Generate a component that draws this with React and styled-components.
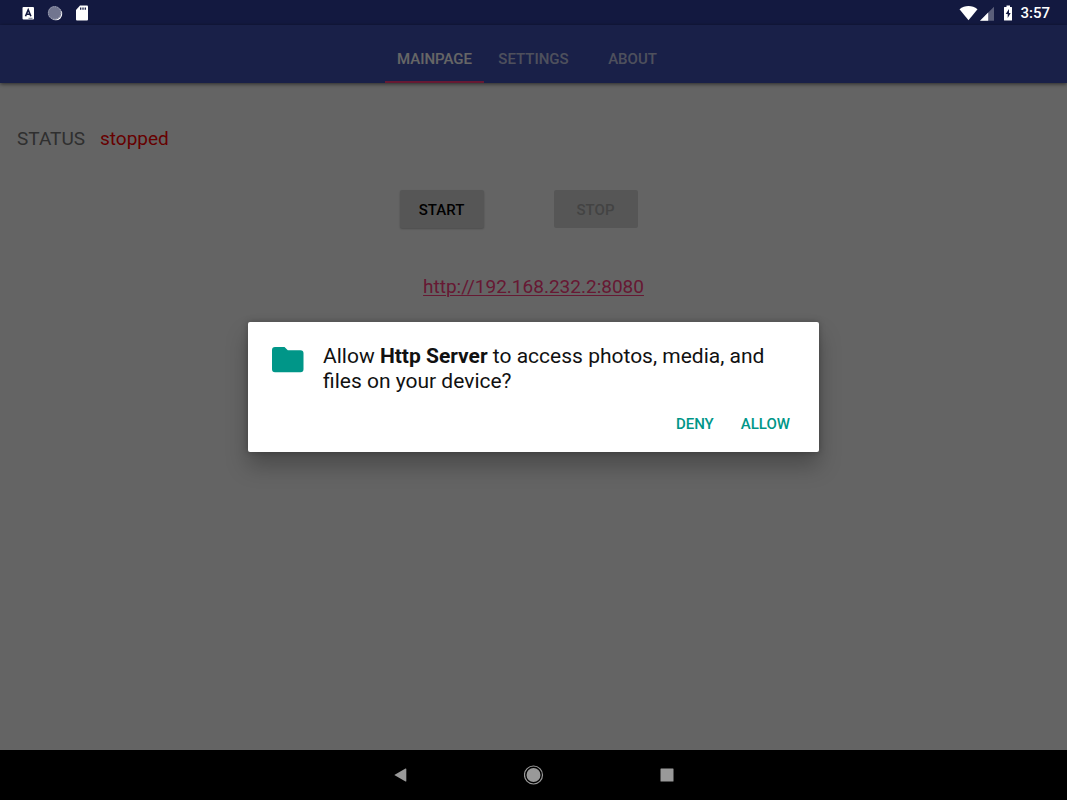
import styled, { createGlobalStyle, css } from 'styled-components';

const GlobalStyle = createGlobalStyle`
  * {
    box-sizing: border-box;
  }
  body {
    margin: 0;
    font-family: Roboto, 'Liberation Sans', sans-serif;
    background-color: #000;
  }
`;

const Device = styled.div`
  display: flex;
  flex-direction: column;
  min-height: 100vh;
`;

const StatusBar = styled.div`
  display: flex;
  justify-content: space-between;
  align-items: center;
  height: 25px;
  padding: 0 17px 0 21px;
  background-color: #131940;
  color: #fff;
`;

const Notifications = styled.div`
  display: flex;
  align-items: center;
  column-gap: 12px;
`;

const SystemIcons = styled.div`
  display: flex;
  align-items: center;
`;

const Clock = styled.time`
  margin-left: 4px;
  font-size: 15px;
  font-weight: 500;
  line-height: 23px;
  padding-top: 2px;
`;

const AppWindow = styled.div`
  position: relative;
  flex: 1;
  display: flex;
  flex-direction: column;
  background-color: #fafafa;
`;

const AppBar = styled.header`
  display: flex;
  justify-content: center;
  padding-top: 10px;
  background-color: #3f51b5;
  box-shadow: 0 1px 4px rgba(0, 0, 0, 0.6);
`;

const Tabs = styled.nav`
  display: grid;
  grid-template-columns: repeat(3, 99px);
`;

const Tab = styled.button`
  height: 48px;
  padding: 2px 0 0;
  border: 0;
  border-bottom: 2px solid ${({ $active }) => ($active ? '#ff4081' : 'transparent')};
  background: none;
  color: ${({ $active }) => ($active ? '#fff' : 'rgba(255, 255, 255, 0.7)')};
  font-family: inherit;
  font-size: 15px;
  font-weight: 500;
  text-align: center;
`;

const Content = styled.main`
  display: flex;
  flex-direction: column;
  align-items: center;
  padding: 44px 17px;
`;

const Status = styled.p`
  display: flex;
  align-self: stretch;
  column-gap: 15px;
  margin: 0;
  color: #757575;
  font-size: 19px;
  line-height: 24px;
`;

const StatusValue = styled.span`
  color: #ff0000;
`;

const Actions = styled.div`
  display: flex;
  column-gap: 70px;
  margin-top: 39px;
  padding-right: 30px;
`;

const raised = css`
  box-shadow: 0 1px 2px rgba(0, 0, 0, 0.25);
`;

const ActionButton = styled.button`
  width: 84px;
  height: 38px;
  padding: 2px 0 0;
  border: 0;
  border-radius: 2px;
  background-color: #d6d7d7;
  color: #000;
  font-family: inherit;
  font-size: 15px;
  font-weight: 500;
  ${({ disabled }) => !disabled && raised}
  &:disabled {
    color: #a8a8a8;
  }
`;

const ServerLink = styled.a`
  margin-top: 47px;
  color: #ff4081;
  font-size: 19px;
  line-height: 24px;
  text-decoration-thickness: 1px;
  text-underline-offset: 2px;
`;

const Scrim = styled.div`
  position: absolute;
  inset: 0;
  display: flex;
  justify-content: center;
  align-items: center;
  background-color: rgba(0, 0, 0, 0.6);
`;

const Dialog = styled.section`
  width: 571px;
  max-width: 90%;
  margin-bottom: 1px;
  padding: 22px 17px 9px 23px;
  border-radius: 2px;
  background-color: #fff;
  box-shadow: 0 14px 22px rgba(0, 0, 0, 0.26), 0 0 6px rgba(0, 0, 0, 0.25);
`;

const Message = styled.div`
  display: flex;
  column-gap: 19px;
`;

const FolderIcon = styled.svg`
  flex: none;
  width: 33px;
  height: 32px;
`;

const Question = styled.h1`
  margin: 0;
  color: #111;
  font-size: 21px;
  font-weight: 400;
  line-height: 25px;
`;

const DialogButtons = styled.div`
  display: flex;
  justify-content: flex-end;
  column-gap: 3px;
  margin-top: 11px;
`;

const DialogButton = styled.button`
  height: 38px;
  padding: 0 12px;
  border: 0;
  background: none;
  color: #009688;
  font-family: inherit;
  font-size: 15px;
  font-weight: 500;
`;

const NavigationBar = styled.nav`
  display: flex;
  justify-content: center;
  column-gap: 83px;
  height: 50px;
  background-color: #000;
`;

const NavButton = styled.button`
  display: flex;
  justify-content: center;
  align-items: center;
  width: 50px;
  padding: 0;
  border: 0;
  background: none;
`;

const KeyboardIcon = () => (
  <svg width="14" height="16" viewBox="0 0 14 16" aria-hidden="true">
    <rect x="1.5" y="2" width="11.5" height="12.5" rx="1" fill="#fff" />
    <path d="M4.500 11.200 7.200 4.800l2.700 6.400M5.300 9.200h3.800" fill="none" stroke="#131940" strokeWidth="1.6" />
    <path d="M7.500 13.300h4" stroke="#131940" strokeWidth=".6" />
  </svg>
);

const SyncIcon = () => (
  <svg width="16" height="16" viewBox="0 0 16 16" aria-hidden="true">
    <circle cx="8.9" cy="9" r="6.300" fill="#fff" />
    <circle cx="7.6" cy="7.900" r="6.800" fill="#71758f" />
    <circle cx="7.6" cy="7.900" r="6.200" fill="none" stroke="#a0a3b5" strokeDasharray="1.2 1.2" />
  </svg>
);

const SdCardIcon = () => (
  <svg width="14" height="16" viewBox="0 0 14 16" aria-hidden="true">
    <path d="M5 0.5h7q1 0 1 1v13q0 1-1 1H2q-1 0-1-1V5z" fill="#fff" />
    <path d="M5.7 2.5v2.2M8 2.5v2.2M10.3 2.5v2.2" stroke="#131940" strokeWidth="1.3" />
  </svg>
);

const WifiIcon = () => (
  <svg width="19" height="16" viewBox="0 0 19 16" aria-hidden="true">
    <path d="M9.5 15.2.5 4.3C5.8-.1 13.200-.1 18.500 4.300z" fill="#fff" />
  </svg>
);

const SignalIcon = () => (
  <svg width="20" height="16" viewBox="0 0 20 16" aria-hidden="true">
    <path d="M16 1.700V15.700H2z" fill="#5a5e79" />
    <path d="M10.200 7.500V15.700H2z" fill="#fff" />
  </svg>
);

const BatteryIcon = () => (
  <svg width="18" height="16" viewBox="0 0 18 16" aria-hidden="true">
    <path d="M8.500.500h3.500v1.500h1.500q.500 0 .500.500v12.500q0 .500-.500.500H6.500q-.500 0-.500-.500V2.500q0-.500.500-.500h2z" fill="#fff" />
    <path d="M11 4 7.700 9h2v4l3-5H11z" fill="#131940" />
  </svg>
);

const tabs = ['MAINPAGE', 'SETTINGS', 'ABOUT'];

const App = () => {
  return (
    <>
      <GlobalStyle />
      <Device>
        <StatusBar>
          <Notifications>
            <KeyboardIcon />
            <SyncIcon />
            <SdCardIcon />
          </Notifications>
          <SystemIcons>
            <WifiIcon />
            <SignalIcon />
            <BatteryIcon />
            <Clock>3:57</Clock>
          </SystemIcons>
        </StatusBar>

        <AppWindow>
          <AppBar>
            <Tabs>
              {tabs.map((tab, index) => (
                <Tab key={tab} type="button" $active={index === 0}>
                  {tab}
                </Tab>
              ))}
            </Tabs>
          </AppBar>
          <Content>
            <Status>
              STATUS <StatusValue>stopped</StatusValue>
            </Status>
            <Actions>
              <ActionButton type="button">START</ActionButton>
              <ActionButton type="button" disabled>
                STOP
              </ActionButton>
            </Actions>
            <ServerLink href="http://192.168.232.2:8080">http://192.168.232.2:8080</ServerLink>
          </Content>

          <Scrim>
            <Dialog role="dialog" aria-modal="true" aria-labelledby="permission-question">
              <Message>
                <FolderIcon viewBox="0 0 33 32" aria-hidden="true">
                  <path
                    d="M4 3h9.500l3.300 3.300H29.500q3 0 3 3V25.200q0 3-3 3H4q-3 0-3-3V6q0-3 3-3z"
                    fill="#009688"
                  />
                </FolderIcon>
                <Question id="permission-question">
                  Allow <strong>Http Server</strong> to access photos, media, and files on your device?
                </Question>
              </Message>
              <DialogButtons>
                <DialogButton type="button">DENY</DialogButton>
                <DialogButton type="button">ALLOW</DialogButton>
              </DialogButtons>
            </Dialog>
          </Scrim>
        </AppWindow>

        <NavigationBar aria-label="System">
          <NavButton type="button" aria-label="Back">
            <svg width="20" height="20" viewBox="0 0 20 20">
              <path d="M3.300 10 14.500 3.600q.800-.300.800.500V15.900q0 .800-.800.500z" fill="#999" />
            </svg>
          </NavButton>
          <NavButton type="button" aria-label="Home">
            <svg width="20" height="20" viewBox="0 0 20 20">
              <circle cx="9.500" cy="10" r="9" fill="none" stroke="#999" strokeWidth="1.200" />
              <circle cx="9.500" cy="10" r="7" fill="#999" />
            </svg>
          </NavButton>
          <NavButton type="button" aria-label="Overview">
            <svg width="20" height="20" viewBox="0 0 20 20">
              <rect x="3.500" y="3.500" width="13" height="13" rx=".500" fill="#999" />
            </svg>
          </NavButton>
        </NavigationBar>
      </Device>
    </>
  );
};

export default App;
